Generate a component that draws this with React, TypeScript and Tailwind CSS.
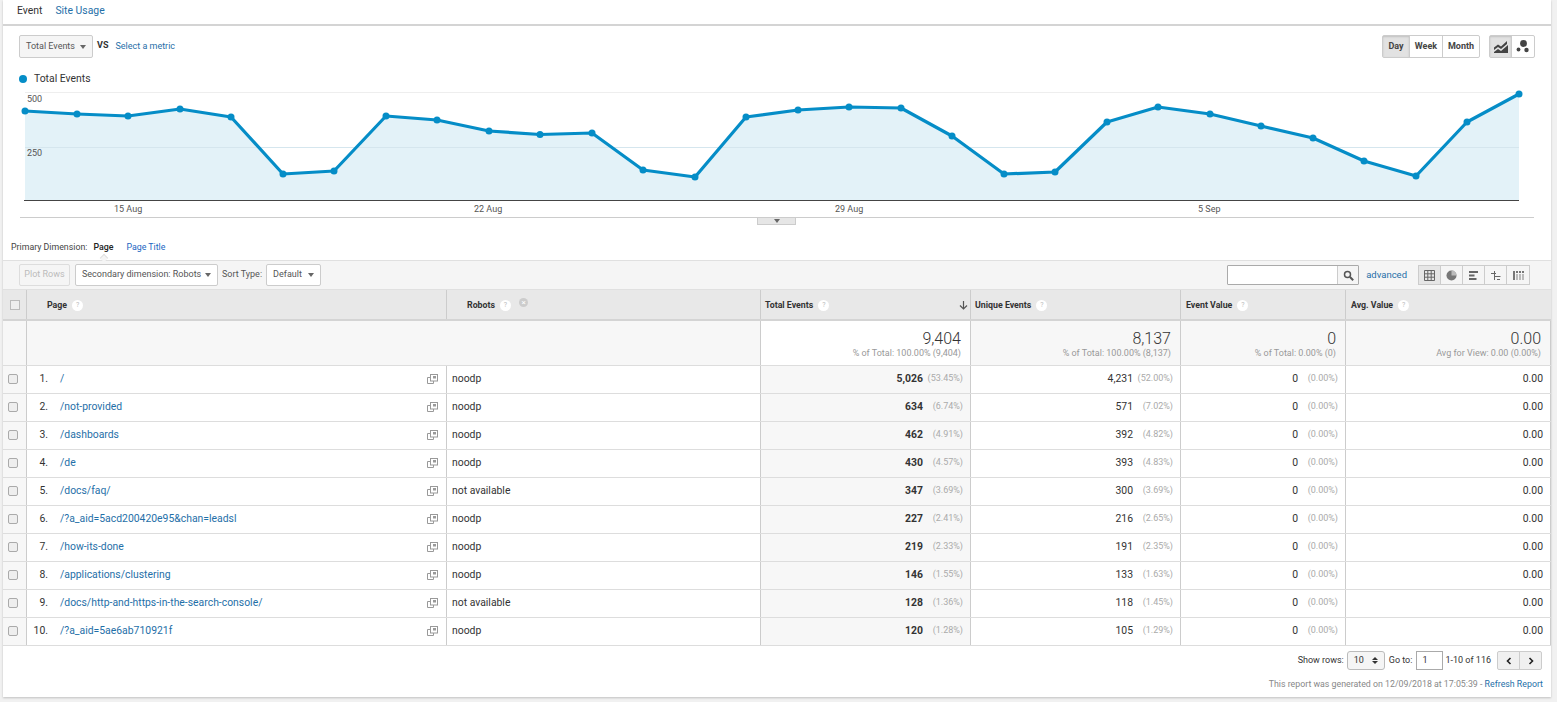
import * as React from "react";

const points: [number, number][] = [
  [25, 111], [77, 114], [128, 116], [180, 109], [231, 117], [283, 174], [334, 171], [386, 116], [437, 120], [489, 131],
  [540, 134.5], [592, 133], [643, 170], [695, 177], [746, 117], [798, 110], [849, 107], [901, 108], [952, 136], [1004, 174],
  [1055, 172], [1107, 122], [1158, 107], [1210, 114], [1261, 126], [1313, 138], [1364, 161], [1416, 176], [1467, 122], [1519, 94],
];

const rows = [
  { page: "/", robots: "noodp", total: "5,026", totalPct: "(53.45%)", unique: "4,231", uniquePct: "(52.00%)" },
  { page: "/not-provided", robots: "noodp", total: "634", totalPct: "(6.74%)", unique: "571", uniquePct: "(7.02%)" },
  { page: "/dashboards", robots: "noodp", total: "462", totalPct: "(4.91%)", unique: "392", uniquePct: "(4.82%)" },
  { page: "/de", robots: "noodp", total: "430", totalPct: "(4.57%)", unique: "393", uniquePct: "(4.83%)" },
  { page: "/docs/faq/", robots: "not available", total: "347", totalPct: "(3.69%)", unique: "300", uniquePct: "(3.69%)" },
  { page: "/?a_aid=5acd200420e95&chan=leadsl", robots: "noodp", total: "227", totalPct: "(2.41%)", unique: "216", uniquePct: "(2.65%)" },
  { page: "/how-its-done", robots: "noodp", total: "219", totalPct: "(2.33%)", unique: "191", uniquePct: "(2.35%)" },
  { page: "/applications/clustering", robots: "noodp", total: "146", totalPct: "(1.55%)", unique: "133", uniquePct: "(1.63%)" },
  { page: "/docs/http-and-https-in-the-search-console/", robots: "not available", total: "128", totalPct: "(1.36%)", unique: "118", uniquePct: "(1.45%)" },
  { page: "/?a_aid=5ae6ab710921f", robots: "noodp", total: "120", totalPct: "(1.28%)", unique: "105", uniquePct: "(1.29%)" },
];

const gridCols = "grid grid-cols-[24px_420px_314px_210px_210px_165px_205px]";

function Caret() {
  return <span className="inline-block w-0 h-0 border-x-[3.5px] border-x-transparent border-t-[4px] border-t-[#666]" />;
}

function Help() {
  return (
    <span className="inline-flex items-center justify-center w-[11px] h-[11px] rounded-full bg-white text-[7px] font-normal text-[#bbb] leading-none">
      ?
    </span>
  );
}

function OpenIcon() {
  return (
    <svg width="11" height="10" viewBox="0 0 11 10" fill="none" stroke="#999" strokeWidth="1">
      <path d="M3.5 3.5H.5v6h6V7" />
      <rect x="3.5" y="0.5" width="7" height="6.5" fill="#fff" />
      <rect x="6" y="2" width="3" height="2.5" fill="#999" stroke="none" />
    </svg>
  );
}

function Chart() {
  const line = points.map((p) => p.join(",")).join(" ");
  const area = `25,200 ${line} 1519,200`;
  return (
    <svg width="1548" height="127" viewBox="3 92 1548 127" className="block overflow-visible">
      <line x1="25" y1="92.5" x2="1519" y2="92.5" stroke="#eeeeee" />
      <polygon points={area} fill="#e3f2f8" />
      <line x1="25" y1="147.5" x2="1519" y2="147.5" stroke="#d5e6ee" />
      <polyline points={line} fill="none" stroke="#058dc7" strokeWidth="3.2" strokeLinejoin="round" />
      {points.map((p) => (
        <circle key={p[0]} cx={p[0]} cy={p[1]} r="3.5" fill="#058dc7" />
      ))}
      <line x1="24" y1="200.5" x2="1519" y2="200.5" stroke="#444" />
      <g fontFamily="Roboto, sans-serif" fontSize="9" fill="#555">
        <text x="27" y="102">500</text>
        <text x="27" y="156">250</text>
        <text x="114" y="212">15 Aug</text>
        <text x="474" y="212">22 Aug</text>
        <text x="835" y="212">29 Aug</text>
        <text x="1198" y="212">5 Sep</text>
      </g>
    </svg>
  );
}

function ViewIcon({ kind }: { kind: number }) {
  if (kind === 0)
    return (
      <svg width="11" height="11" viewBox="0 0 11 11" fill="none" stroke="#666">
        <path d="M.5.5h10v10H.5zM.5 3.8h10M.5 7.2h10M3.8.5v10M7.2.5v10" />
      </svg>
    );
  if (kind === 1)
    return (
      <svg width="11" height="11" viewBox="0 0 11 11">
        <circle cx="5.5" cy="5.5" r="5" fill="#777" />
        <path d="M5.5 .5a5 5 0 0 1 5 5h-5z" fill="#bbb" />
      </svg>
    );
  if (kind === 2)
    return (
      <svg width="11" height="11" viewBox="0 0 11 11" fill="#666">
        <rect x="1" y="1" width="9" height="2" />
        <rect x="1" y="4.5" width="5.5" height="2" />
        <rect x="1" y="8" width="7.5" height="2" />
      </svg>
    );
  if (kind === 3)
    return (
      <svg width="11" height="11" viewBox="0 0 11 11" fill="none" stroke="#666">
        <path d="M1 3.5h5M4.5 1v9M4.5 6.5h6M7 9.5h3" />
      </svg>
    );
  return (
    <svg width="11" height="9" viewBox="0 0 11 9" fill="#777">
      <rect x="0" y="0" width="2" height="9" />
      <rect x="3" y="0" width="2" height="2" />
      <rect x="3" y="3" width="2" height="6" fill="#bbb" />
      <rect x="6" y="0" width="2" height="2" />
      <rect x="6" y="3" width="2" height="6" fill="#bbb" />
      <rect x="9" y="0" width="2" height="2" />
      <rect x="9" y="3" width="2" height="6" fill="#bbb" />
    </svg>
  );
}

function MetricCell({ value, pct, bg, strong }: { value: string; pct: string; bg?: string; strong?: boolean }) {
  return (
    <div className={`flex items-center justify-end pb-[2px] pr-[7px] border-r border-[#ccc] ${bg ?? ""}`}>
      <span className={strong ? "font-bold" : ""}>{value}</span>
      <span className="w-[40px] text-right text-[9px] text-[#aaa]">{pct}</span>
    </div>
  );
}

function HeaderCell({ label, className }: { label: string; className?: string }) {
  return (
    <div className={`flex items-center gap-[5px] pt-[2px] border-r border-[#ccc] ${className ?? ""}`}>
      <span>{label}</span>
      <Help />
    </div>
  );
}

function TotalCell({ value, sub }: { value: string; sub: string }) {
  return (
    <div className="flex flex-col items-end justify-center pt-[2px] pr-[9px] border-r border-[#ccc] bg-[#f7f7f7]">
      <span className="text-[16px] leading-[19px] font-light text-[#333]">{value}</span>
      <span className="text-[9px] leading-[11px] text-[#999]">{sub}</span>
    </div>
  );
}

export default function App() {
  return (
    <div className="h-[702px] w-[1557px] overflow-hidden bg-[#f1f1f1] font-['Roboto',sans-serif] text-[10.4px] text-[#333]">
      <div className="ml-[3px] w-[1548px] h-[697px] bg-white shadow-[0_1px_2px_rgba(0,0,0,0.2)]">
        {/* Tabs */}
        <div className="h-[26px] flex items-center gap-[13px] pl-[14px] pb-[2px] border-b-2 border-[#d4d4d4]">
          <span>Event</span>
          <a className="text-[#1f6fa8]">Site Usage</a>
        </div>

        {/* Metric picker + period buttons */}
        <div className="h-[23px] mt-[9px] flex items-center pl-[16px] pr-[16px]">
          <div className="w-[74px] h-[23px] flex items-center justify-between px-[6px] border border-[#ccc] rounded-[2px] bg-[#f5f5f5] text-[9px] text-[#555]">
            <span>Total Events</span>
            <Caret />
          </div>
          <span className="ml-[4px] mb-[2px] text-[9px] font-bold text-[#333]">VS</span>
          <a className="ml-[7px] text-[9px] text-[#1f6fa8]">Select a metric</a>
          <div className="ml-auto flex items-center gap-[9px]">
            <div className="flex h-[23px] border border-[#ccc] rounded-[2px] text-[9px] font-bold text-[#444]">
              <span className="w-[27px] flex items-center justify-center bg-[#e2e2e2] shadow-[inset_0_1px_2px_rgba(0,0,0,0.15)] border-r border-[#ccc]">Day</span>
              <span className="w-[33px] flex items-center justify-center border-r border-[#ccc]">Week</span>
              <span className="w-[36px] flex items-center justify-center">Month</span>
            </div>
            <div className="flex h-[23px] border border-[#ccc] rounded-[2px]">
              <span className="w-[22px] flex items-center justify-center bg-[#e2e2e2] shadow-[inset_0_1px_2px_rgba(0,0,0,0.15)] border-r border-[#ccc]">
                <svg width="14" height="13" viewBox="0 0 14 13" fill="#444">
                  <path d="M0 7.5l4-3 3 2 6-5.5v3L7 9 4 7 0 10zM0 13v-1l4-3 3 2 7-6v8z" />
                </svg>
              </span>
              <span className="w-[22px] flex items-center justify-center">
                <svg width="14" height="13" viewBox="0 0 14 13" fill="#444">
                  <circle cx="7.5" cy="3.5" r="3.4" />
                  <circle cx="2.5" cy="9.5" r="1.9" />
                  <circle cx="10.5" cy="10" r="2.2" />
                </svg>
              </span>
            </div>
          </div>
        </div>

        {/* Legend */}
        <div className="h-[13px] mt-[14px] flex items-center gap-[7px] pl-[16px]">
          <span className="w-[8px] h-[8px] rounded-full bg-[#058dc7]" />
          <span className="text-[#333]">Total Events</span>
        </div>

        {/* Chart */}
        <div className="mt-[7px] relative">
          <Chart />
          <div className="ml-[17px] w-[1514px] h-px bg-[#ccc] -mt-[2px]" />
          <div className="absolute left-[754px] top-[126px] w-[39px] h-[7px] flex items-center justify-center bg-[#e6e6e6] border-b border-x border-[#ccc]">
            <Caret />
          </div>
        </div>

        {/* Primary dimension */}
        <div className="mt-[23px] h-[14px] flex items-center pl-[8px] text-[8.8px]">
          <span className="text-[#444]">Primary Dimension:</span>
          <span className="relative ml-[6px] font-medium text-[#222]">
            Page
            <span className="absolute left-[8px] top-[14px] w-[6px] h-[6px] rotate-45 bg-[#f5f5f5] border-l border-t border-[#e0e0e0]" />
          </span>
          <a className="ml-[13px] text-[#1a66c2]">Page Title</a>
        </div>

        {/* Toolbar */}
        <div className="mt-[5px] h-[30px] flex items-center pl-[16px] pr-[21px] bg-[#f5f5f5] border-y border-[#e0e0e0] text-[9px] text-[#555]">
          <span className="w-[51px] h-[22px] flex items-center justify-center border border-[#ddd] rounded-[2px] text-[#bbb]">Plot Rows</span>
          <div className="ml-[5px] w-[143px] h-[22px] flex items-center justify-between px-[6px] border border-[#ccc] rounded-[2px] bg-white">
            <span>Secondary dimension: Robots</span>
            <Caret />
          </div>
          <span className="ml-[4px]">Sort Type:</span>
          <div className="ml-[4px] w-[55px] h-[22px] flex items-center justify-between px-[6px] border border-[#ccc] rounded-[2px] bg-white">
            <span>Default</span>
            <Caret />
          </div>
          <div className="ml-auto flex h-[20px] w-[132px] border border-[#aaa] rounded-[1px] bg-white">
            <span className="flex-1" />
            <span className="w-[21px] flex items-center justify-center border-l border-[#ccc] bg-[#f5f5f5]">
              <svg width="11" height="11" viewBox="0 0 11 11" fill="none" stroke="#555">
                <circle cx="4.5" cy="4.5" r="3" strokeWidth="1.5" />
                <path d="M7 7l3.2 3.2" strokeWidth="2" />
              </svg>
            </span>
          </div>
          <a className="ml-[7px] text-[9.5px] text-[#1f6fa8]">advanced</a>
          <div className="ml-[11px] flex h-[20px] border border-[#ccc] bg-[#f5f5f5]">
            {[0, 1, 2, 3, 4].map((k) => (
              <span
                key={k}
                className={`w-[22px] flex items-center justify-center ${k < 4 ? "border-r border-[#ccc]" : ""} ${k === 0 ? "bg-[#e6e6e6]" : ""}`}
              >
                <ViewIcon kind={k} />
              </span>
            ))}
          </div>
        </div>

        {/* Table header */}
        <div className={`${gridCols} h-[31px] border-b-2 border-[#d4d4d4] bg-[#e8e8e8] text-[8.8px] font-bold text-[#333]`}>
          <div className="flex items-center justify-center border-r border-[#ccc]">
            <span className="w-[10px] h-[10px] border border-[#bbb] bg-[#eee]" />
          </div>
          <HeaderCell label="Page" className="pl-[20px]" />
          <div className="flex items-center gap-[5px] pt-[2px] pl-[20px] border-r border-[#ccc]">
            <span>Robots</span>
            <Help />
            <span className="ml-[3px] mb-[6px] w-[9px] h-[9px] rounded-full bg-[#ccc] text-white text-[8px] leading-[9px] text-center font-normal">×</span>
          </div>
          <div className="flex items-center gap-[5px] pt-[2px] pl-[4px] pr-[2px] border-r border-[#ccc]">
            <span>Total Events</span>
            <Help />
            <svg className="ml-auto" width="9" height="9" viewBox="0 0 9 9" fill="none" stroke="#555" strokeWidth="1.2">
              <path d="M4.5 0v8M1 4.5l3.5 3.5L8 4.5" />
            </svg>
          </div>
          <HeaderCell label="Unique Events" className="pl-[4px]" />
          <HeaderCell label="Event Value" className="pl-[5px]" />
          <HeaderCell label="Avg. Value" className="pl-[5px] border-r-0" />
        </div>

        {/* Totals */}
        <div className={`${gridCols} h-[45px] border-b border-[#ddd] bg-[#f7f7f7]`}>
          <div className="border-r border-[#ccc]" />
          <div className="col-span-2 border-r border-[#ccc]" />
          <div className="flex flex-col items-end justify-center pt-[2px] pr-[9px] border-r border-[#ccc] bg-white">
            <span className="text-[16px] leading-[19px] font-light text-[#333]">9,404</span>
            <span className="text-[9px] leading-[11px] text-[#999]">% of Total: 100.00% (9,404)</span>
          </div>
          <TotalCell value="8,137" sub="% of Total: 100.00% (8,137)" />
          <TotalCell value="0" sub="% of Total: 0.00% (0)" />
          <TotalCell value="0.00" sub="Avg for View: 0.00 (0.00%)" />
        </div>

        {/* Rows */}
        {rows.map((r, i) => (
          <div key={r.page} className={`${gridCols} h-[28px] border-b border-[#ddd]`}>
            <div className="flex items-center justify-center pr-[3px] pb-[2px] bg-[#f7f7f7] border-r border-[#ccc]">
              <span className="w-[10px] h-[10px] rounded-[2px] border border-[#aaa] bg-[#eee]" />
            </div>
            <div className="flex items-center pb-[2px] border-r border-[#ccc] pr-[8px]">
              <span className="w-[21px] text-right">{i + 1}.</span>
              <a className="ml-[12px] text-[#1f6fa8]">{r.page}</a>
              <span className="ml-auto flex"><OpenIcon /></span>
            </div>
            <div className="flex items-center pb-[2px] pl-[5px] border-r border-[#ccc]">{r.robots}</div>
            <MetricCell value={r.total} pct={r.totalPct} bg="bg-[#f7f7f7]" strong />
            <MetricCell value={r.unique} pct={r.uniquePct} />
            <MetricCell value="0" pct="(0.00%)" />
            <div className="flex items-center justify-end pb-[2px] pr-[7px] border-r border-[#ccc]">0.00</div>
          </div>
        ))}

        {/* Pagination */}
        <div className="mt-[5px] h-[19px] flex items-center justify-end pr-[9px] text-[9px] text-[#333]">
          <span>Show rows:</span>
          <div className="ml-[3px] w-[38px] h-[19px] flex items-center justify-between px-[6px] border border-[#bbb] rounded-[3px] bg-[#f5f5f5]">
            <span>10</span>
            <span className="flex flex-col gap-[1px]">
              <span className="w-0 h-0 border-x-[3px] border-x-transparent border-b-[3px] border-b-[#333]" />
              <span className="w-0 h-0 border-x-[3px] border-x-transparent border-t-[3px] border-t-[#333]" />
            </span>
          </div>
          <span className="ml-[4px]">Go to:</span>
          <div className="ml-[4px] w-[27px] h-[19px] flex items-center pl-[5px] border border-[#aaa] bg-white">1</div>
          <span className="ml-[2px]">1-10 of 116</span>
          <div className="ml-[6px] flex h-[19px] w-[45px] border border-[#ccc] rounded-[2px] bg-[#f0f0f0]">
            <span className="flex-1 flex items-center justify-center border-r border-[#ccc]">
              <svg width="6" height="8" viewBox="0 0 6 8" fill="none" stroke="#222" strokeWidth="1.6"><path d="M4.5 1L1.5 4l3 3" /></svg>
            </span>
            <span className="flex-1 flex items-center justify-center">
              <svg width="6" height="8" viewBox="0 0 6 8" fill="none" stroke="#222" strokeWidth="1.6"><path d="M1.5 1l3 3-3 3" /></svg>
            </span>
          </div>
        </div>
        <div className="mt-[8px] pr-[8px] text-right text-[8.8px] text-[#888]">
          This report was generated on 12/09/2018 at 17:05:39 - <a className="text-[#1f6fa8]">Refresh Report</a>
        </div>
      </div>
    </div>
  );
}
